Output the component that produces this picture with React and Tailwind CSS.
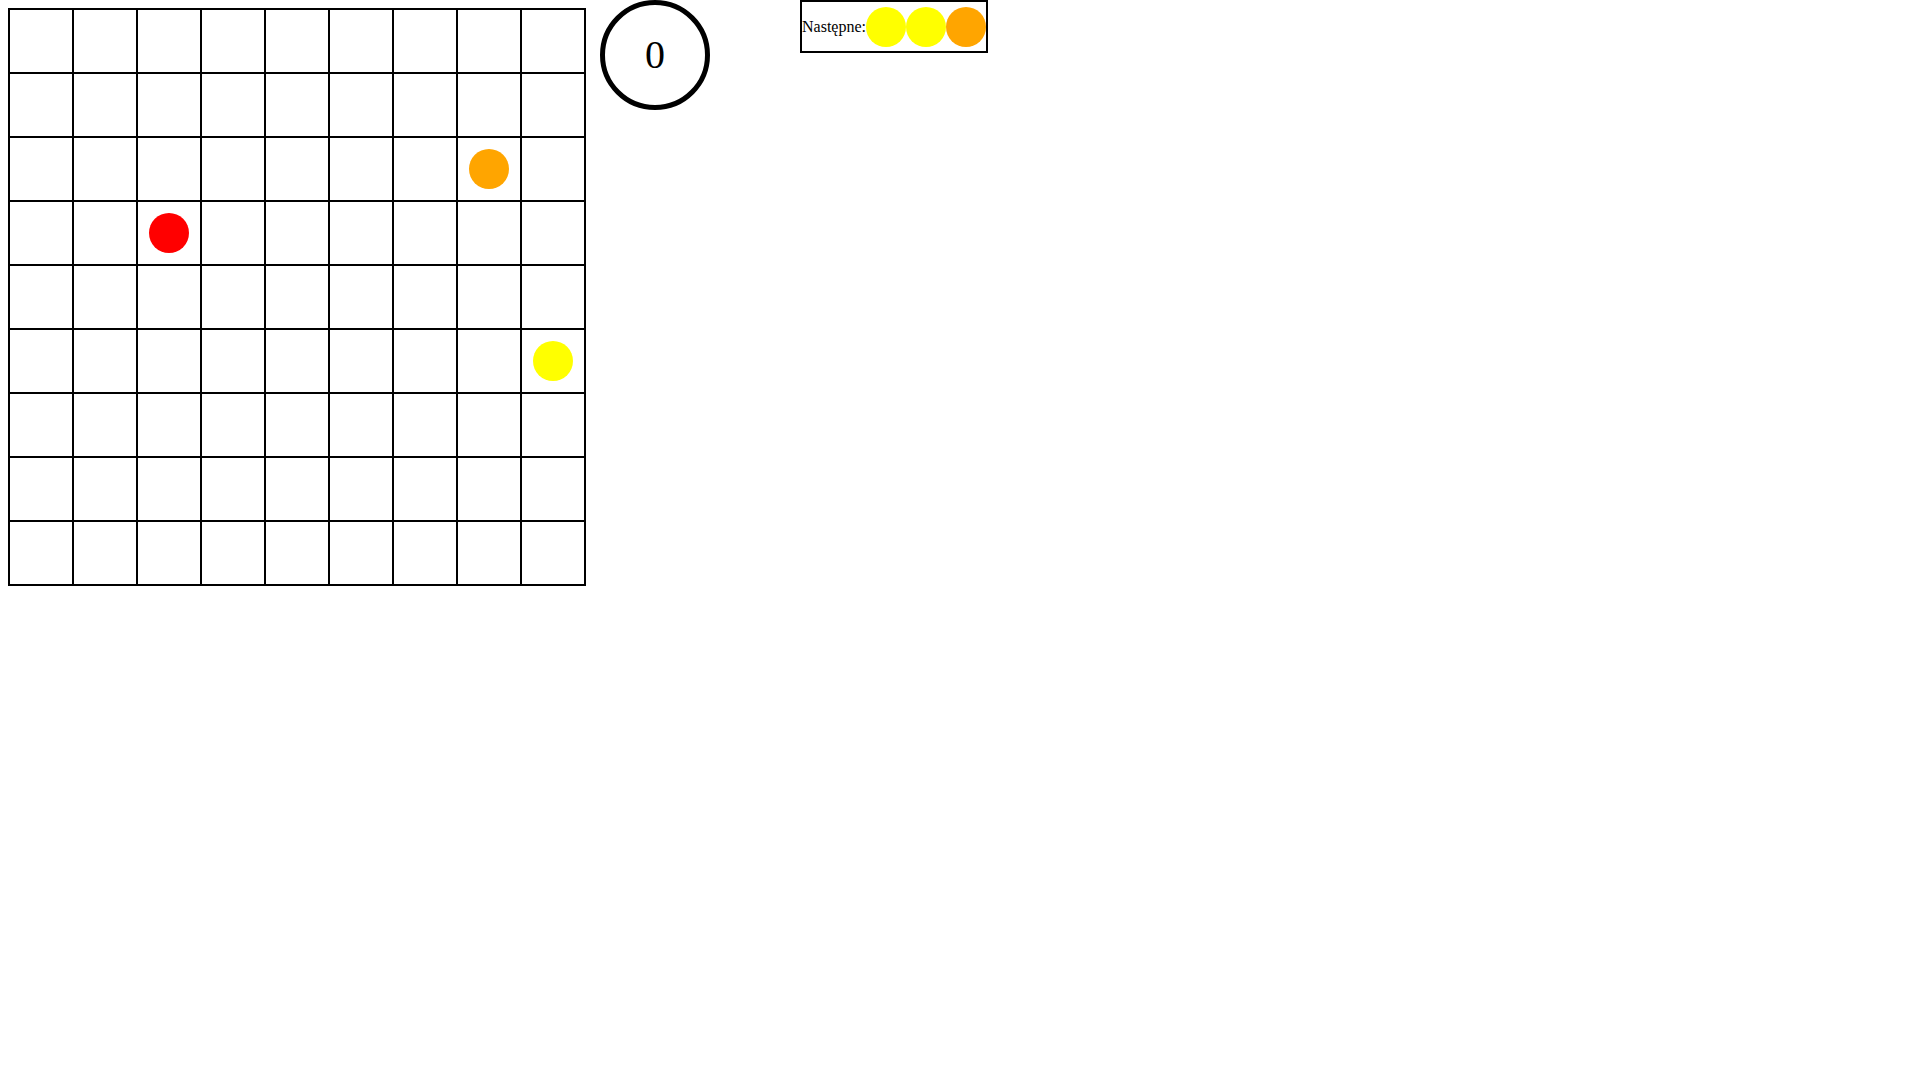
const balls = {
  "2-7": "bg-[#ffa500]",
  "3-2": "bg-[#ff0000]",
  "5-8": "bg-[#ffff00]",
};

const next = ["bg-[#ffff00]", "bg-[#ffff00]", "bg-[#ffa500]"];

function Board() {
  const cells = [];
  for (let r = 0; r < 9; r++) {
    for (let c = 0; c < 9; c++) {
      const ball = balls[r + "-" + c];
      cells.push(
        <div
          key={r + "-" + c}
          className="w-16 h-16 border-r-2 border-b-2 border-black flex items-center justify-center"
        >
          {ball && <div className={"w-10 h-10 rounded-full " + ball} />}
        </div>
      );
    }
  }
  return (
    <div className="m-2 grid grid-cols-[repeat(9,64px)] border-l-2 border-t-2 border-black">
      {cells}
    </div>
  );
}

export default function App() {
  return (
    <div
      className="flex items-start bg-white min-h-screen text-black"
      style={{ fontFamily: '"Liberation Serif", "Times New Roman", serif' }}
    >
      <Board />
      <div className="ml-[6px] w-[110px] h-[110px] rounded-full border-[5px] border-black flex items-center justify-center text-[40px]">
        0
      </div>
      <div className="ml-[90px] h-[53px] border-2 border-black flex items-center">
        <span className="text-base">Następne:</span>
        {next.map((cls, i) => (
          <div key={i} className={"w-10 h-10 rounded-full " + cls} />
        ))}
      </div>
    </div>
  );
}
